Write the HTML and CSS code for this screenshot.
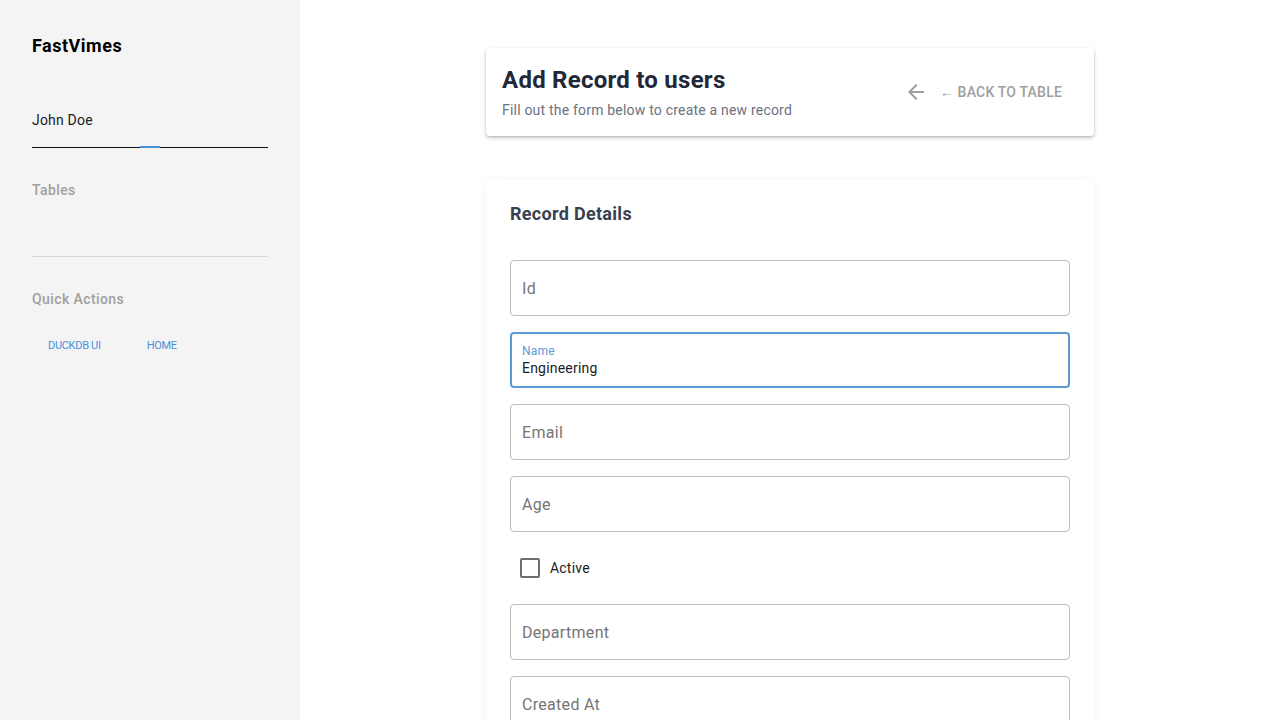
FILE: index.html
```html
<!DOCTYPE html>
<html>
<head>
<meta charset="utf-8">
<link rel="stylesheet" href="styles.css">
</head>
<body>
<div class="app">
  <aside class="sidebar">
    <div class="brand">FastVimes</div>
    <div class="user">
      <div class="user-name">John Doe</div>
      <div class="user-line"><span class="user-accent"></span></div>
    </div>
    <div class="section-title tables">Tables</div>
    <div class="divider"></div>
    <div class="section-title">Quick Actions</div>
    <div class="actions">
      <a class="action">DUCKDB UI</a>
      <a class="action">HOME</a>
    </div>
  </aside>
  <main class="main">
    <div class="container">
      <div class="card header-card">
        <div class="header-text">
          <h1 class="title">Add Record to users</h1>
          <p class="subtitle">Fill out the form below to create a new record</p>
        </div>
        <button class="back">
          <svg class="back-icon" viewBox="0 0 24 24" width="24" height="24"><path d="M20 11H7.83l5.59-5.59L12 4l-8 8 8 8 1.41-1.41L7.83 13H20v-2z" fill="#9e9e9e"/></svg>
          <span class="back-text">← BACK TO TABLE</span>
        </button>
      </div>
      <div class="card form-card">
        <h2 class="form-title">Record Details</h2>
        <div class="fields">
          <div class="field"><span class="placeholder">Id</span></div>
          <div class="field focused"><span class="float-label">Name</span><span class="value">Engineering</span></div>
          <div class="field"><span class="placeholder">Email</span></div>
          <div class="field"><span class="placeholder">Age</span></div>
          <label class="check-row"><span class="checkbox"></span><span class="check-label">Active</span></label>
          <div class="field"><span class="placeholder">Department</span></div>
          <div class="field"><span class="placeholder">Created At</span></div>
        </div>
      </div>
    </div>
  </main>
</div>
</body>
</html>
```
FILE: styles.css
```css
* { box-sizing: border-box; }
html, body { margin: 0; padding: 0; height: 100%; overflow: hidden; }
body { font-family: Roboto, "Liberation Sans", sans-serif; background: #ffffff; color: #212121; letter-spacing: 0.2px; }
.app { display: flex; height: 720px; }
.sidebar { width: 300px; flex: none; background: #f4f4f4; padding: 32px; }
.brand { font-size: 18px; font-weight: 700; color: #000; line-height: 28px; margin-bottom: 50px; letter-spacing: 0.5px; }
.user-name { font-size: 14px; color: #212121; line-height: 20px; margin-bottom: 17px; }
.user-line { height: 1px; background: #111; position: relative; display: flex; justify-content: center; }
.user-accent { display: block; width: 20px; height: 2px; background: #4a90d9; margin-top: -1px; }
.section-title { font-size: 14px; font-weight: 500; color: #a0a0a0; line-height: 20px; letter-spacing: 0.4px; }
.tables { margin-top: 32px; }
.divider { height: 1px; background: #d6d6d6; margin: 56px 0 32px; }
.actions { display: flex; gap: 46px; padding-left: 16px; margin-top: 30px; }
.action { font-size: 11px; color: #4a90d9; font-weight: 400; line-height: 14px; letter-spacing: -0.3px; }
.main { flex: 1; padding-top: 48px; }
.container { width: 608px; margin: 0 auto; }
.card { background: #fff; border-radius: 4px; }
.header-card { display: flex; align-items: center; justify-content: space-between; height: 88px; padding: 0 16px;
  box-shadow: 0 2px 4px rgba(0,0,0,0.2), 0 1px 2px rgba(0,0,0,0.12); }
.title { margin: 0; font-size: 24px; font-weight: 700; color: #1f2937; line-height: 32px; letter-spacing: 0.25px; }
.subtitle { margin: 4px 0 0; font-size: 14px; color: #6b7280; line-height: 20px; letter-spacing: 0.2px; }
.back { display: flex; align-items: center; gap: 12px; background: none; border: none; padding: 0 16px 0 0; font-family: inherit; }
.back-icon { display: block; }
.back-text { font-size: 14px; font-weight: 500; color: #9e9e9e; letter-spacing: 0.2px; }
.form-card { margin-top: 44px; padding: 24px; box-shadow: 0 2px 12px rgba(0,0,0,0.06); min-height: 600px; }
.form-title { margin: 0; font-size: 18px; font-weight: 700; color: #374151; line-height: 20px; letter-spacing: 0.3px; }
.fields { margin-top: 36px; display: flex; flex-direction: column; gap: 16px; }
.field { height: 56px; border: 1px solid #bdbdbd; border-radius: 4px; padding: 0 11px; display: flex; flex-direction: column; justify-content: center; }
.placeholder { font-size: 16px; color: #757575; letter-spacing: 0.3px; }
.field.focused { border: 2px solid #5b9bd5; padding: 0 10px; }
.float-label { font-size: 12px; color: #5b9bd5; line-height: 14px; margin-top: 2px; }
.value { font-size: 14px; color: #212121; line-height: 20px; }
.check-row { height: 40px; display: flex; align-items: center; padding-left: 10px; gap: 10px; }
.checkbox { width: 20px; height: 20px; border: 2px solid #6e6e6e; border-radius: 2px; }
.check-label { font-size: 14px; color: #212121; }
```
